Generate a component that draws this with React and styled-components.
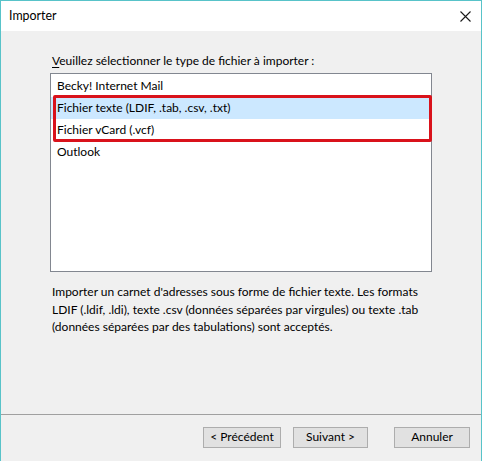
import React from "react";
import styled, { createGlobalStyle } from "styled-components";

const Global = createGlobalStyle`
  html, body { margin: 0; padding: 0; background: #ffffff; }
  body { font-family: Lato, "Noto Sans", sans-serif; }
  * { box-sizing: border-box; }
`;

const Window = styled.div`
  width: 482px;
  height: 461px;
  display: flex;
  flex-direction: column;
  border: 1px solid #58c3c9;
  border-bottom: none;
  background: #f0f0f0;
  font-family: Lato, "Noto Sans", sans-serif;
  font-size: 12px;
  color: #000;
`;

const TitleBar = styled.div`
  height: 30px;
  flex: none;
  display: flex;
  align-items: center;
  justify-content: space-between;
  background: #ffffff;
  padding: 0 10px 0 8px;
`;

const Title = styled.span`
  font-size: 12.4px;
  line-height: 16px;
  color: #000;
`;

const CloseIcon = styled.svg`
  width: 11px;
  height: 11px;
`;

const Body = styled.div`
  flex: 1;
  display: flex;
  flex-direction: column;
  padding: 22px 49px 0 49px;
`;

const Label = styled.div`
  padding-left: 2px;
  line-height: 16px;
  margin-bottom: 4px;
`;

const Mnemonic = styled.span`
  text-decoration: underline;
  text-underline-offset: 2px;
`;

const List = styled.div`
  position: relative;
  height: 199px;
  background: #ffffff;
  border: 1px solid #828790;
  padding-top: 1px;
  display: flex;
  flex-direction: column;
`;

const Item = styled.div`
  height: 22px;
  line-height: 21px;
  padding-left: 6px;
  background: ${(p) => (p.$selected ? "#cce8ff" : "transparent")};
`;

const Highlight = styled.div`
  position: absolute;
  left: 2px;
  top: 21px;
  width: 379px;
  height: 47px;
  border: 3px solid #d9121b;
  border-radius: 2px;
  pointer-events: none;
`;

const Description = styled.p`
  margin: 11px 0 0 0;
  padding-left: 2px;
  line-height: 17.5px;
`;

const Footer = styled.div`
  height: 47px;
  flex: none;
  border-top: 1px solid #a0a0a0;
  display: flex;
  align-items: center;
  justify-content: flex-end;
  padding: 0 11px 2px 0;
`;

const Button = styled.button`
  width: ${(p) => p.$w}px;
  height: 21px;
  margin-left: ${(p) => p.$gap}px;
  background: #e1e1e1;
  border: 1px solid #adadad;
  font-family: inherit;
  font-size: 12px;
  color: #000;
  padding: 0;
  line-height: 18px;
`;

export default function App() {
  return (
    <>
      <Global />
      <Window>
        <TitleBar>
          <Title>Importer</Title>
          <CloseIcon viewBox="0 0 11 11">
            <path d="M0.5 0.5 L10.5 10.5 M10.5 0.5 L0.5 10.5" stroke="#1a1a1a" strokeWidth="1.1" fill="none" />
          </CloseIcon>
        </TitleBar>
        <Body>
          <Label>
            <Mnemonic>V</Mnemonic>euillez sélectionner le type de fichier à importer :
          </Label>
          <List>
            <Item>Becky! Internet Mail</Item>
            <Item $selected>Fichier texte (LDIF, .tab, .csv, .txt)</Item>
            <Item>Fichier vCard (.vcf)</Item>
            <Item>Outlook</Item>
            <Highlight />
          </List>
          <Description>
            Importer un carnet d'adresses sous forme de fichier texte. Les formats LDIF (.ldif, .ldi), texte .csv (données séparées par virgules) ou texte .tab (données séparées par des tabulations) sont acceptés.
          </Description>
        </Body>
        <Footer>
          <Button $w={78} $gap={0}>&lt; Précédent</Button>
          <Button $w={75} $gap={12}>Suivant &gt;</Button>
          <Button $w={76} $gap={26}>Annuler</Button>
        </Footer>
      </Window>
    </>
  );
}
